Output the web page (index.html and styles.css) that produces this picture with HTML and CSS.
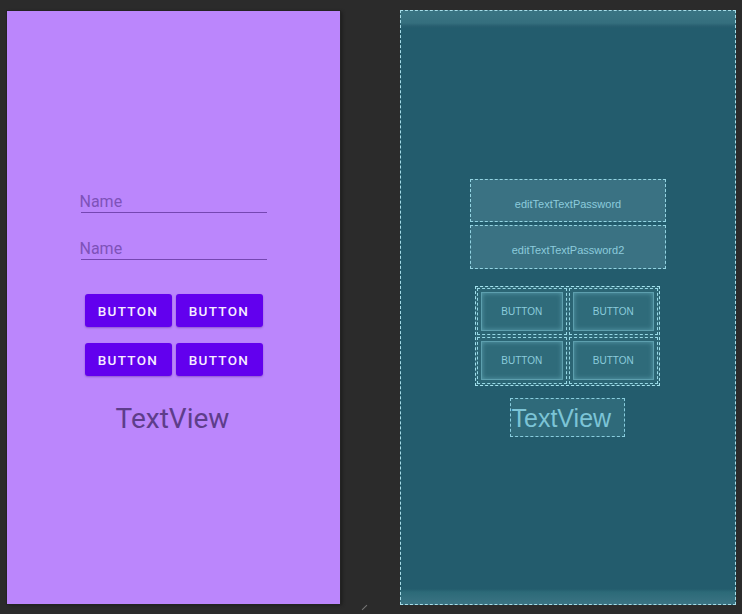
FILE: index.html
```html
<!DOCTYPE html>
<html>
<head>
<meta charset="utf-8">
<link rel="stylesheet" href="styles.css">
</head>
<body>
<div class="canvas">
  <div class="design">
    <div class="edit">Name</div>
    <div class="edit edit-second">Name</div>
    <div class="btn-grid">
      <div class="btn">BUTTON</div>
      <div class="btn">BUTTON</div>
      <div class="btn">BUTTON</div>
      <div class="btn">BUTTON</div>
    </div>
    <div class="textview">TextView</div>
  </div>
  <div class="blueprint">
    <div class="bp-edit">editTextTextPassword</div>
    <div class="bp-edit bp-edit-second">editTextTextPassword2</div>
    <div class="bp-grid">
      <div class="bp-cell"><div class="bp-btn">BUTTON</div></div>
      <div class="bp-cell"><div class="bp-btn">BUTTON</div></div>
      <div class="bp-cell"><div class="bp-btn">BUTTON</div></div>
      <div class="bp-cell"><div class="bp-btn">BUTTON</div></div>
    </div>
    <div class="bp-text">TextView</div>
  </div>
  <span class="handle"></span>
</div>
</body>
</html>
```
FILE: styles.css
```css
html, body {
  margin: 0;
  padding: 0;
}
body {
  background: #2b2b2b;
  width: 742px;
  height: 614px;
  overflow: hidden;
}
.canvas {
  position: relative;
  display: flex;
  align-items: flex-start;
  gap: 60px;
  padding: 10px 0 0 7px;
}
.design {
  margin-top: 1px;
  width: 333px;
  height: 593px;
  background: #bb86fc;
  box-shadow: 0 0 0 1px #242424, 2px 1px 3px #1c1c1c;
  display: flex;
  flex-direction: column;
  align-items: center;
  padding-top: 181px;
  box-sizing: border-box;
  font-family: Roboto, "Noto Sans", sans-serif;
}
.edit {
  width: 186px;
  height: 20px;
  border-bottom: 1px solid #7546b2;
  font-size: 16px;
  line-height: 19px;
  color: #7e52b9;
  box-sizing: content-box;
  text-indent: -1px;
}
.edit-second {
  margin-top: 26px;
}
.btn-grid {
  margin-top: 34px;
  display: grid;
  grid-template-columns: 87px 87px;
  column-gap: 4px;
  row-gap: 16px;
}
.btn {
  height: 33px;
  background: #6200ee;
  border-radius: 3px;
  color: #f6ecff;
  font-size: 13.5px;
  font-weight: 500;
  letter-spacing: 1.3px;
  line-height: 35px;
  text-align: center;
  box-shadow: 0 1px 2px rgba(60, 0, 120, 0.35);
}
.textview {
  margin-top: 26px;
  font-size: 28px;
  line-height: 33px;
  color: #5e3d8b;
  margin-left: -2px;
}
.blueprint {
  width: 336px;
  height: 595px;
  box-sizing: border-box;
  border: 1px dashed #a6dde8;
  background: linear-gradient(to bottom,
    #3a7483 0px, #356f7e 12px, #285f70 15px, #235c6d 17px,
    #235c6d calc(100% - 15px), #2c6a78 calc(100% - 12px), #3b7383 100%);
  display: flex;
  flex-direction: column;
  align-items: center;
  padding-top: 168px;
  font-family: "Liberation Sans", Arial, sans-serif;
  color: #8dcfe0;
}
.bp-edit {
  width: 196px;
  height: 43px;
  box-sizing: border-box;
  border: 1px dashed #93d4e2;
  background: #3a7283;
  font-size: 11px;
  text-align: center;
  line-height: 41px;
  padding-top: 4px;
  color: #8ccbdc;
}
.bp-edit-second {
  margin-top: 3px;
  height: 44px;
}
.bp-grid {
  margin-top: 17px;
  width: 185px;
  height: 100px;
  box-sizing: border-box;
  border: 1px dashed #a4e2ee;
  display: grid;
  grid-template-columns: 1fr 1fr;
  grid-template-rows: 1fr 1fr;
  gap: 2px;
  padding: 1px;
  background: #2e6877;
  margin-left: -1px;
}
.bp-cell {
  border: 1px dashed #97d9e6;
  padding: 3px;
  background: #2b6574;
}
.bp-btn {
  height: 100%;
  box-sizing: border-box;
  border: 1px solid #5d9fae;
  background: #2f6b7a;
  box-shadow: inset 0 0 5px rgba(140, 215, 230, 0.45);
  font-size: 10px;
  text-align: center;
  display: flex;
  align-items: center;
  justify-content: center;
  color: #8bcbdc;
}
.bp-text {
  margin-top: 12px;
  width: 115px;
  height: 39px;
  box-sizing: border-box;
  border: 1px dashed #89cdde;
  background: #2f6a7a;
  font-size: 25px;
  line-height: 38px;
  padding-left: 1px;
  color: #7cc4d6;
  margin-left: -2px;
}
.handle {
  position: absolute;
  left: 361px;
  top: 607px;
  width: 7px;
  height: 1px;
  background: #777;
  transform: rotate(-45deg);
}
```
